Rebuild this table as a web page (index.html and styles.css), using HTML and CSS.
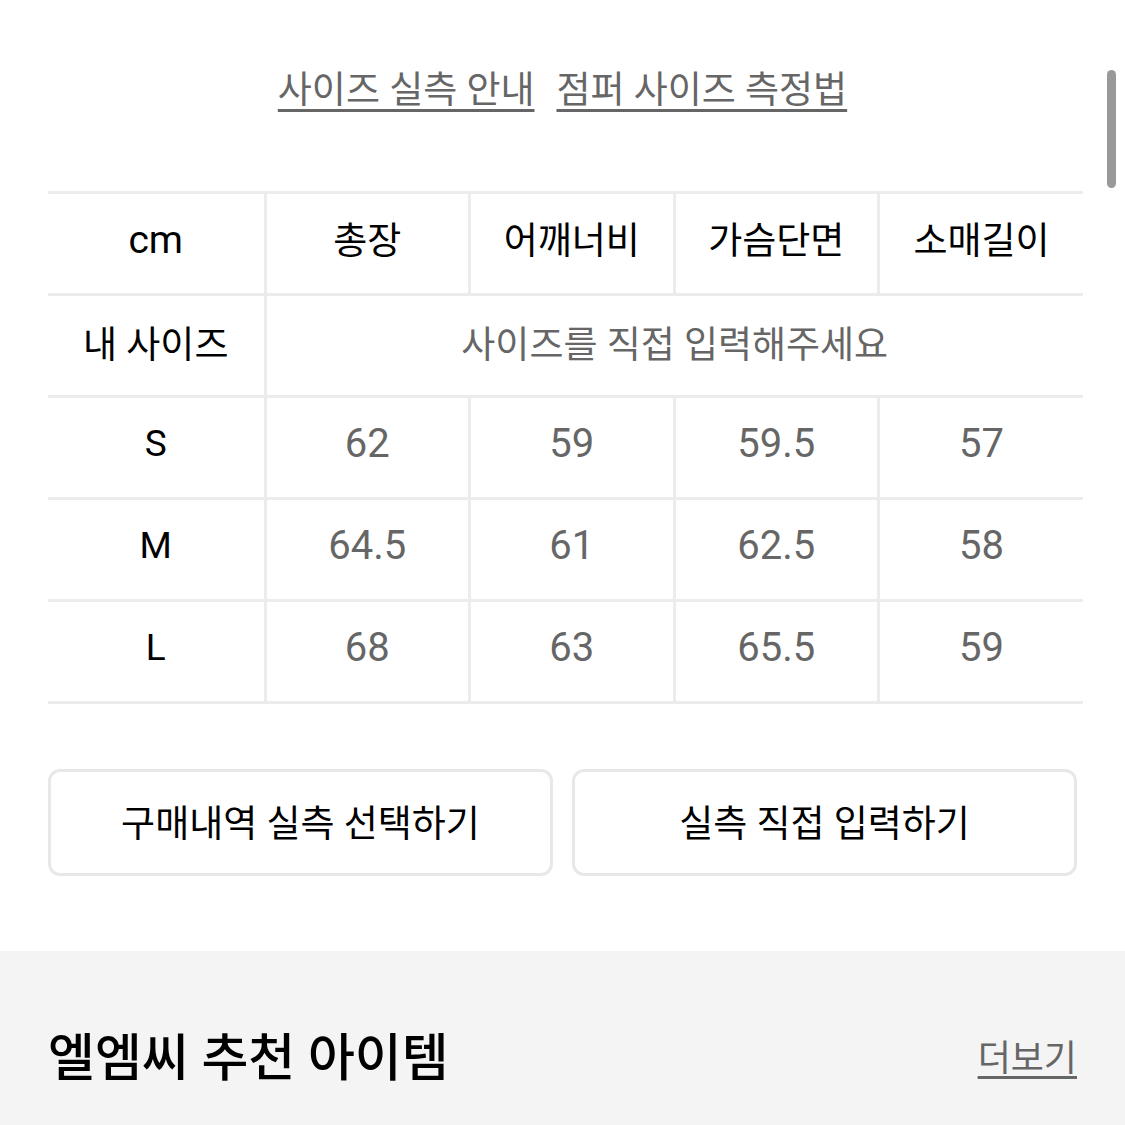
FILE: index.html
```html
<!DOCTYPE html>
<html lang="ko">
<head>
<meta charset="utf-8">
<title>사이즈</title>
<link rel="stylesheet" href="styles.css">
</head>
<body>
<div class="page">
  <div class="guide-links">
    <a class="guide-link" href="#">사이즈 실측 안내</a>
    <a class="guide-link" href="#">점퍼 사이즈 측정법</a>
  </div>

  <table class="size-table">
    <colgroup>
      <col class="c-first"><col class="c-data"><col class="c-data"><col class="c-data"><col class="c-data">
    </colgroup>
    <tr class="head">
      <td class="label">cm</td><td>총장</td><td>어깨너비</td><td>가슴단면</td><td>소매길이</td>
    </tr>
    <tr>
      <td class="label">내 사이즈</td><td class="hint" colspan="4">사이즈를 직접 입력해주세요</td>
    </tr>
    <tr>
      <td class="label">S</td><td class="val">62</td><td class="val">59</td><td class="val">59.5</td><td class="val">57</td>
    </tr>
    <tr>
      <td class="label">M</td><td class="val">64.5</td><td class="val">61</td><td class="val">62.5</td><td class="val">58</td>
    </tr>
    <tr>
      <td class="label">L</td><td class="val">68</td><td class="val">63</td><td class="val">65.5</td><td class="val">59</td>
    </tr>
  </table>

  <div class="actions">
    <button class="action-btn">구매내역 실측 선택하기</button>
    <button class="action-btn">실측 직접 입력하기</button>
  </div>
</div>

<section class="recommend">
  <div class="recommend-head">
    <h2 class="recommend-title">엘엠씨 추천 아이템</h2>
    <a class="more-link" href="#">더보기</a>
  </div>
</section>

<div class="scroll-indicator"></div>
</body>
</html>
```

FILE: styles.css
```css
html, body {
  margin: 0;
  padding: 0;
  background: #ffffff;
}

body {
  font-family: Roboto, "Noto Sans CJK KR", sans-serif;
  color: #000;
  overflow: hidden;
}

.page {
  padding: 0 48px;
}

.guide-links {
  display: flex;
  justify-content: center;
  gap: 22px;
  padding-top: 66px;
  height: 127px;
  box-sizing: border-box;
}

.guide-link {
  font-size: 37px;
  line-height: 50px;
  color: #666;
  text-decoration: underline;
  text-decoration-thickness: 3px;
  text-underline-offset: 6px;
}

.size-table {
  width: 1035px;
  border-collapse: collapse;
  table-layout: fixed;
  margin-top: 64px;
}

.c-first { width: 217px; }
.c-data { width: 204.5px; }

.size-table tr {
  height: 102px;
  border-top: 3px solid #ececec;
  border-bottom: 3px solid #ececec;
}

.size-table td {
  padding: 0 0 8px;
  text-align: center;
  vertical-align: middle;
  font-size: 37px;
  border-left: 3px solid #ececec;
}

.size-table td.label {
  border-left: none;
  color: #000;
}

.size-table tr.head td {
  color: #000;
  padding-bottom: 12px;
}

.size-table tr.head td.label {
  font-size: 39px;
  padding-bottom: 8px;
}

.size-table td.val {
  color: #666;
  font-size: 40px;
}

.size-table td.hint {
  color: #666;
}

.actions {
  display: flex;
  gap: 19px;
  margin-top: 65px;
}

.action-btn {
  flex: 1;
  height: 107px;
  background: #fff;
  border: 3px solid #e8e8e8;
  border-radius: 12px;
  font-family: Roboto, "Noto Sans CJK KR", sans-serif;
  font-size: 37px;
  color: #000;
  padding: 0 0 4px;
}

.recommend {
  margin-top: 75px;
  background: #f4f4f4;
  padding: 76px 48px 60px;
  height: 300px;
}

.recommend-head {
  display: flex;
  justify-content: space-between;
  align-items: center;
}

.recommend-title {
  margin: 0;
  font-size: 51px;
  font-weight: 500;
  line-height: 64px;
  color: #000;
}

.more-link {
  font-size: 36px;
  line-height: 40px;
  color: #666;
  text-decoration: underline;
  text-decoration-thickness: 3px;
  text-underline-offset: 5px;
}

.scroll-indicator {
  position: fixed;
  top: 70px;
  right: 9px;
  width: 9px;
  height: 118px;
  border-radius: 5px;
  background: #999;
}
```
